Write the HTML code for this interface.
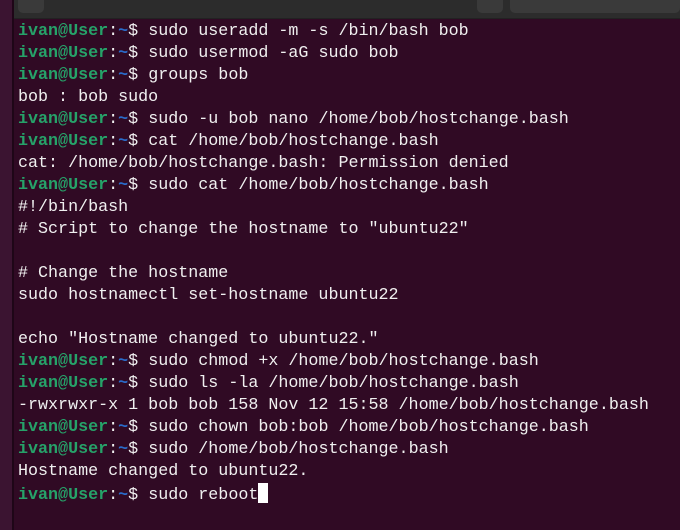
<!DOCTYPE html>
<html><head><meta charset="utf-8"><style>
html,body{margin:0;padding:0;width:680px;height:530px;overflow:hidden;background:#300a24;}
.strip{position:absolute;left:0;top:0;width:12px;height:530px;background:#3b1431;}
.sline{position:absolute;left:12px;top:0;width:2px;height:530px;background:#1e0617;}
.bar{position:absolute;left:14px;top:0;width:666px;height:18px;background:#2c2c2c;border-bottom:1px solid #222;}
.btn{position:absolute;top:0;height:13px;background:#3a3a3a;border-radius:0 0 5px 5px;}
pre{position:absolute;left:18px;top:21px;margin:0;font-family:"Liberation Mono",monospace;font-size:16.7px;line-height:22px;color:#f0f0f0;}
.g{color:#26a269;font-weight:bold}.b{color:#2a6bc9;font-weight:bold}
.cur{display:inline-block;width:10px;height:20px;background:#fff;vertical-align:-4px}
</style></head><body>
<div class="strip"></div><div class="sline"></div>
<div class="bar"><div class="btn" style="left:4px;width:26px"></div><div class="btn" style="left:463px;width:26px"></div><div class="btn" style="left:496px;width:170px"></div></div>
<pre><span class="g">ivan@User</span>:<span class="b">~</span>$ sudo useradd -m -s /bin/bash bob
<span class="g">ivan@User</span>:<span class="b">~</span>$ sudo usermod -aG sudo bob
<span class="g">ivan@User</span>:<span class="b">~</span>$ groups bob
bob : bob sudo
<span class="g">ivan@User</span>:<span class="b">~</span>$ sudo -u bob nano /home/bob/hostchange.bash
<span class="g">ivan@User</span>:<span class="b">~</span>$ cat /home/bob/hostchange.bash
cat: /home/bob/hostchange.bash: Permission denied
<span class="g">ivan@User</span>:<span class="b">~</span>$ sudo cat /home/bob/hostchange.bash
#!/bin/bash
# Script to change the hostname to "ubuntu22"

# Change the hostname
sudo hostnamectl set-hostname ubuntu22

echo "Hostname changed to ubuntu22."
<span class="g">ivan@User</span>:<span class="b">~</span>$ sudo chmod +x /home/bob/hostchange.bash
<span class="g">ivan@User</span>:<span class="b">~</span>$ sudo ls -la /home/bob/hostchange.bash
-rwxrwxr-x 1 bob bob 158 Nov 12 15:58 /home/bob/hostchange.bash
<span class="g">ivan@User</span>:<span class="b">~</span>$ sudo chown bob:bob /home/bob/hostchange.bash
<span class="g">ivan@User</span>:<span class="b">~</span>$ sudo /home/bob/hostchange.bash
Hostname changed to ubuntu22.
<span class="g">ivan@User</span>:<span class="b">~</span>$ sudo reboot<span class="cur"></span></pre>
</body></html>
